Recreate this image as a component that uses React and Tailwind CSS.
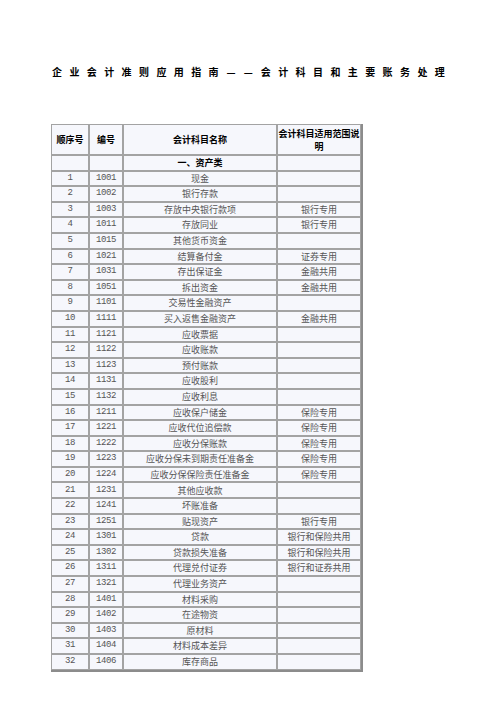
import React from 'react';

const rows = [
  ['1', '1001', '现金', ''],
  ['2', '1002', '银行存款', ''],
  ['3', '1003', '存放中央银行款项', '银行专用'],
  ['4', '1011', '存放同业', '银行专用'],
  ['5', '1015', '其他货币资金', ''],
  ['6', '1021', '结算备付金', '证券专用'],
  ['7', '1031', '存出保证金', '金融共用'],
  ['8', '1051', '拆出资金', '金融共用'],
  ['9', '1101', '交易性金融资产', ''],
  ['10', '1111', '买入返售金融资产', '金融共用'],
  ['11', '1121', '应收票据', ''],
  ['12', '1122', '应收账款', ''],
  ['13', '1123', '预付账款', ''],
  ['14', '1131', '应收股利', ''],
  ['15', '1132', '应收利息', ''],
  ['16', '1211', '应收保户储金', '保险专用'],
  ['17', '1221', '应收代位追偿款', '保险专用'],
  ['18', '1222', '应收分保账款', '保险专用'],
  ['19', '1223', '应收分保未到期责任准备金', '保险专用'],
  ['20', '1224', '应收分保保险责任准备金', '保险专用'],
  ['21', '1231', '其他应收款', ''],
  ['22', '1241', '坏账准备', ''],
  ['23', '1251', '贴现资产', '银行专用'],
  ['24', '1301', '贷款', '银行和保险共用'],
  ['25', '1302', '贷款损失准备', '银行和保险共用'],
  ['26', '1311', '代理兑付证券', '银行和证券共用'],
  ['27', '1321', '代理业务资产', ''],
  ['28', '1401', '材料采购', ''],
  ['29', '1402', '在途物资', ''],
  ['30', '1403', '原材料', ''],
  ['31', '1404', '材料成本差异', ''],
  ['32', '1406', '库存商品', ''],
];

const cjk = "font-['Noto_Sans_CJK_SC',sans-serif]";
const mono = "font-['Liberation_Mono','Noto_Sans_CJK_SC',monospace] tracking-[-0.4px]";
const cell = 'border border-[#a3a3a3] flex items-center justify-center overflow-hidden whitespace-nowrap';

export default function App() {
  return (
    <div className="w-[496px] h-[702px] bg-white">
      <h1 className={`${cjk} h-[80px] pt-[65px] pl-[52px] text-[10px] font-bold tracking-[7.4px] leading-[14px] text-black whitespace-nowrap`}>
        企业会计准则应用指南
        <span className="inline-block align-top h-[14px] w-[10px] overflow-hidden text-center tracking-normal mr-[7.4px]">—</span>
        <span className="inline-block align-top h-[14px] w-[10px] overflow-hidden text-center tracking-normal mr-[7.4px]">—</span>
        会计科目和主要账务处理
      </h1>

      <div className="ml-[51px] mt-[44px] w-[312px] bg-[#f6f7fc] border-r-2 border-b-2 border-[#8c8c8c]">
        <div className="grid grid-cols-[38px_34px_154px_84px] h-[31px] text-[9px] font-bold text-black">
          <div className={`${cell} ${cjk}`}>顺序号</div>
          <div className={`${cell} ${cjk}`}>编号</div>
          <div className={`${cell} ${cjk}`}>会计科目名称</div>
          <div className={`border border-[#a3a3a3] flex items-center justify-center text-center leading-[13px] ${cjk}`}>
            会计科目适用范围说明
          </div>
        </div>
        <div className="grid grid-cols-[38px_34px_154px_84px] h-[15.6px] text-[9px] font-bold text-black">
          <div className={cell}></div>
          <div className={cell}></div>
          <div className={`${cell} ${cjk}`}>一、资产类</div>
          <div className={cell}></div>
        </div>
        {rows.map(([n, code, name, scope]) => (
          <div key={n} className="grid grid-cols-[38px_34px_154px_84px] h-[15.6px] text-[9px]">
            <div className={`${cell} ${mono} text-[#555]`}>{n}</div>
            <div className={`${cell} ${mono} text-[#555]`}>{code}</div>
            <div className={`${cell} ${cjk} text-[#555]`}>{name}</div>
            <div className={`${cell} ${cjk} text-[#555]`}>{scope}</div>
          </div>
        ))}
      </div>
    </div>
  );
}
